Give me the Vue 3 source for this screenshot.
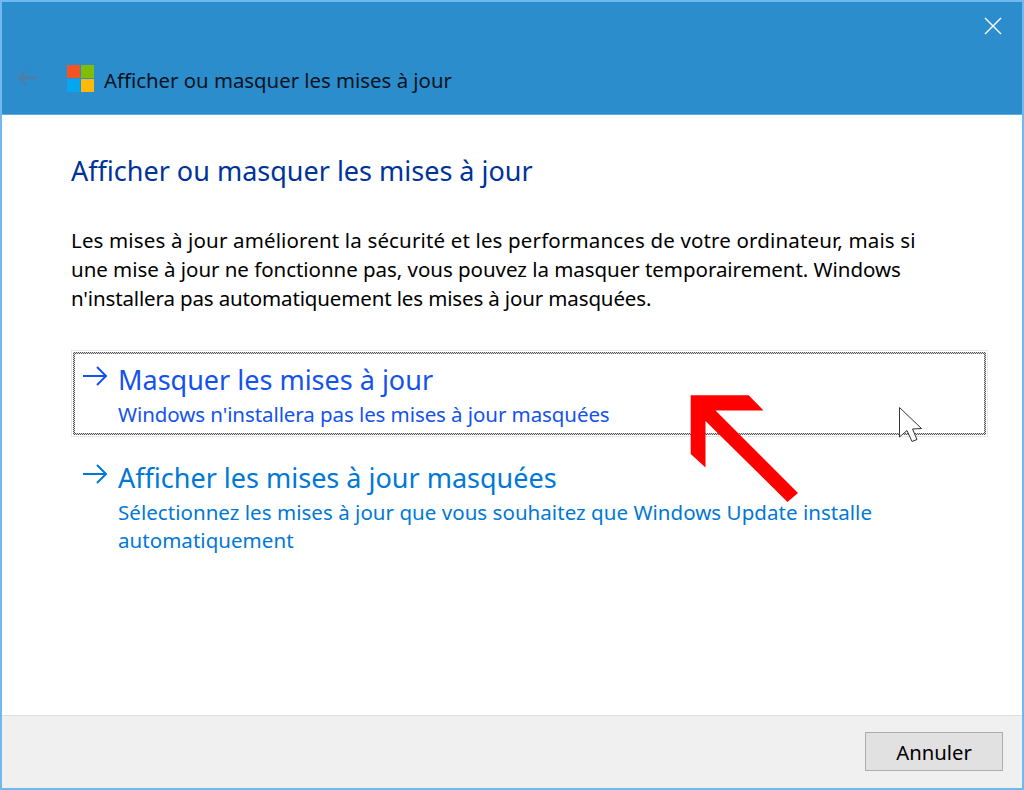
<template>
  <div class="window">
    <header class="titlebar">
      <button class="close" aria-label="Fermer">
        <svg width="18" height="18" viewBox="0 0 18 18"><path d="M1 1L17 17M17 1L1 17" stroke="#fff" stroke-width="1.4" fill="none" /></svg>
      </button>
      <div class="nav">
        <svg class="back" width="22" height="16" viewBox="0 0 22 16"><path d="M21 8H2M9 1L2 8L9 15" stroke="#4f7ca8" stroke-width="2.4" fill="none" /></svg>
        <div class="logo">
          <span class="red"></span><span class="green"></span><span class="blue"></span><span class="yellow"></span>
        </div>
        <span class="title">Afficher ou masquer les mises à jour</span>
      </div>
    </header>

    <main class="content">
      <h1>Afficher ou masquer les mises à jour</h1>
      <p class="intro">
        <span class="line1">Les mises à jour améliorent la sécurité et les performances de votre ordinateur, mais si</span><br>
        <span class="line2">une mise à jour ne fonctionne pas, vous pouvez la masquer temporairement. Windows</span><br>
        <span class="line3">n'installera pas automatiquement les mises à jour masquées.</span>
      </p>

      <div class="options">
        <div v-for="(opt, i) in options" :key="opt.title" class="option" :class="{ active: i === 0 }">
          <div class="option-inner">
            <svg class="go" width="26" height="20" viewBox="0 0 26 20"><path d="M1 10H24M15 1L24 10L15 19" stroke="currentColor" stroke-width="2" fill="none" /></svg>
            <div>
              <div class="option-title">{{ opt.title }}</div>
              <div class="option-sub" v-html="opt.sub"></div>
            </div>
          </div>
        </div>
      </div>
    </main>

    <footer class="bottom">
      <button class="cancel">Annuler</button>
    </footer>

    <svg class="overlay" width="1024" height="790" viewBox="0 0 1024 790">
      <path d="M690.7 395.3H748.7L763.5 410.5H715.5L798 493L787.5 502L705.5 421V467.5L690.7 454Z" fill="#fe0000" />
      <path d="M899.5 407.5V437L907 430.5L912 441.5L917 439.5L912.5 429L921.5 428.5Z" fill="#fff" stroke="#333" stroke-width="1" />
    </svg>
  </div>
</template>

<script setup>
const options = [
  { title: 'Masquer les mises à jour', sub: "Windows n'installera pas les mises à jour masquées" },
  { title: 'Afficher les mises à jour masquées', sub: 'Sélectionnez les mises à jour que vous souhaitez que Windows Update installe<br>automatiquement' }
]
</script>

<style>
body { margin: 0; }
</style>

<style scoped>
.window {
  position: relative;
  width: 1024px;
  height: 790px;
  box-sizing: border-box;
  border: 2px solid #6fb9ee;
  display: flex;
  flex-direction: column;
  background: #fff;
  font-family: "Noto Sans", "Open Sans", sans-serif;
  overflow: hidden;
}
.titlebar {
  height: 112px;
  flex: none;
  background: #2b8dcb;
  border-bottom: 1px solid #5aaee6;
  box-sizing: content-box;
  display: flex;
  flex-direction: column;
  position: relative;
}
.close {
  position: absolute;
  top: 15px;
  right: 20px;
  padding: 0;
  border: 0;
  background: none;
  width: 18px;
  height: 18px;
}
.nav {
  display: flex;
  align-items: center;
  margin-top: 62px;
  height: 28px;
  padding-left: 15px;
}
.back { margin-right: 28px; }
.logo {
  width: 27px;
  height: 27px;
  display: grid;
  grid-template-columns: 13px 13px;
  grid-template-rows: 13px 13px;
  gap: 1px;
  margin-right: 10px;
}
.red { background: #f35325; }
.green { background: #81bc06; }
.blue { background: #05a6f0; }
.yellow { background: #ffba08; }
.title {
  margin-top: 4px;
  font-size: 20.35px;
  color: #08121e;
}
.content {
  flex: 1;
  padding: 0 34px 0 69px;
}
h1 {
  margin: 36px 0 0;
  font-size: 27px;
  line-height: 40px;
  font-weight: 400;
  color: #003399;
}
.intro {
  margin: 35px 0 0;
  font-size: 20.5px;
  line-height: 29px;
  color: #000;
}
.line1 { letter-spacing: 0.15px; }
.line2 { letter-spacing: -0.04px; }
.line3 { letter-spacing: -0.14px; }
.options {
  margin-top: 37px;
}
.option {
  box-sizing: border-box;
  border: 1px solid transparent;
  padding: 1px;
  margin-bottom: 11px;
}
.option.active {
  border-color: #e8e8e8;
  height: 87px;
}
.option-inner {
  display: flex;
  box-sizing: border-box;
  height: 100%;
  padding: 8px 8px 0 7px;
  border: 2px solid transparent;
  color: #0078d7;
}
.active .option-inner {
  color: #1452ee;
  background: linear-gradient(#fff, #fff) padding-box, repeating-conic-gradient(#555 0 25%, #ddd 0 50%) border-box;
  background-size: auto, 2px 2px;
}
.go {
  margin: 4px 10px 0 0;
  flex: none;
}
.option-title {
  font-size: 27px;
  line-height: 36px;
}
.option-sub {
  margin-top: 2px;
  font-size: 20.5px;
  line-height: 28px;
  letter-spacing: 0.04px;
}
.active .option-sub {
  letter-spacing: -0.08px;
}
.bottom {
  flex: none;
  height: 72px;
  background: #f0f0f0;
  border-top: 1px solid #dfdfdf;
  box-sizing: content-box;
  display: flex;
  justify-content: flex-end;
  align-items: flex-start;
  padding-right: 19px;
}
.cancel {
  margin-top: 16px;
  width: 138px;
  height: 39px;
  box-sizing: border-box;
  background: #e1e1e1;
  border: 1px solid #adadad;
  font-family: inherit;
  font-size: 20.3px;
  color: #000;
  padding: 0;
}
.overlay {
  position: absolute;
  left: -2px;
  top: -2px;
  pointer-events: none;
}
</style>
